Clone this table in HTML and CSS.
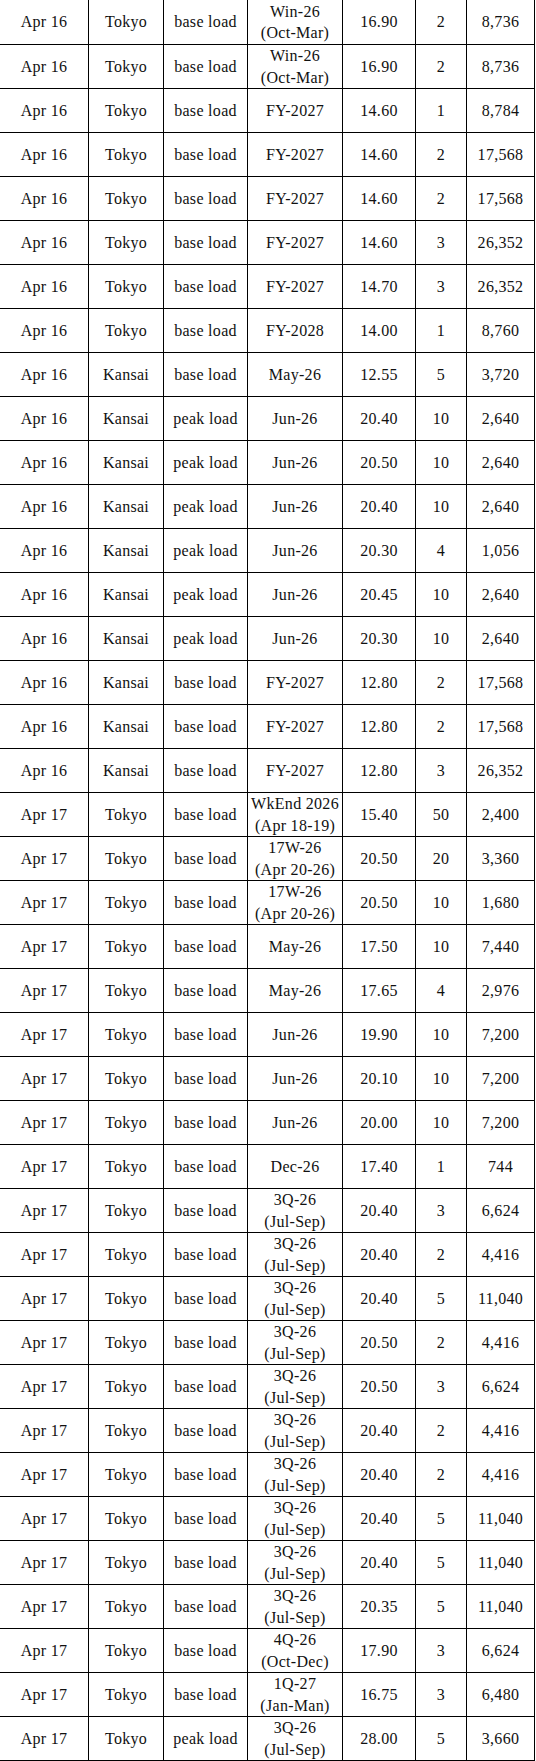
FILE: index.html
```html
<!DOCTYPE html>
<html>
<head>
<meta charset="utf-8">
<link rel="stylesheet" href="styles.css">
</head>
<body>
<table class="trades">
<colgroup>
<col class="c-date"><col class="c-area"><col class="c-type"><col class="c-period"><col class="c-price"><col class="c-qty"><col class="c-vol">
</colgroup>
<tbody>
<tr><td>Apr 16</td><td>Tokyo</td><td>base load</td><td>Win-26<br>(Oct-Mar)</td><td>16.90</td><td>2</td><td>8,736</td></tr>
<tr><td>Apr 16</td><td>Tokyo</td><td>base load</td><td>Win-26<br>(Oct-Mar)</td><td>16.90</td><td>2</td><td>8,736</td></tr>
<tr><td>Apr 16</td><td>Tokyo</td><td>base load</td><td>FY-2027</td><td>14.60</td><td>1</td><td>8,784</td></tr>
<tr><td>Apr 16</td><td>Tokyo</td><td>base load</td><td>FY-2027</td><td>14.60</td><td>2</td><td>17,568</td></tr>
<tr><td>Apr 16</td><td>Tokyo</td><td>base load</td><td>FY-2027</td><td>14.60</td><td>2</td><td>17,568</td></tr>
<tr><td>Apr 16</td><td>Tokyo</td><td>base load</td><td>FY-2027</td><td>14.60</td><td>3</td><td>26,352</td></tr>
<tr><td>Apr 16</td><td>Tokyo</td><td>base load</td><td>FY-2027</td><td>14.70</td><td>3</td><td>26,352</td></tr>
<tr><td>Apr 16</td><td>Tokyo</td><td>base load</td><td>FY-2028</td><td>14.00</td><td>1</td><td>8,760</td></tr>
<tr><td>Apr 16</td><td>Kansai</td><td>base load</td><td>May-26</td><td>12.55</td><td>5</td><td>3,720</td></tr>
<tr><td>Apr 16</td><td>Kansai</td><td>peak load</td><td>Jun-26</td><td>20.40</td><td>10</td><td>2,640</td></tr>
<tr><td>Apr 16</td><td>Kansai</td><td>peak load</td><td>Jun-26</td><td>20.50</td><td>10</td><td>2,640</td></tr>
<tr><td>Apr 16</td><td>Kansai</td><td>peak load</td><td>Jun-26</td><td>20.40</td><td>10</td><td>2,640</td></tr>
<tr><td>Apr 16</td><td>Kansai</td><td>peak load</td><td>Jun-26</td><td>20.30</td><td>4</td><td>1,056</td></tr>
<tr><td>Apr 16</td><td>Kansai</td><td>peak load</td><td>Jun-26</td><td>20.45</td><td>10</td><td>2,640</td></tr>
<tr><td>Apr 16</td><td>Kansai</td><td>peak load</td><td>Jun-26</td><td>20.30</td><td>10</td><td>2,640</td></tr>
<tr><td>Apr 16</td><td>Kansai</td><td>base load</td><td>FY-2027</td><td>12.80</td><td>2</td><td>17,568</td></tr>
<tr><td>Apr 16</td><td>Kansai</td><td>base load</td><td>FY-2027</td><td>12.80</td><td>2</td><td>17,568</td></tr>
<tr><td>Apr 16</td><td>Kansai</td><td>base load</td><td>FY-2027</td><td>12.80</td><td>3</td><td>26,352</td></tr>
<tr><td>Apr 17</td><td>Tokyo</td><td>base load</td><td>WkEnd 2026<br>(Apr 18-19)</td><td>15.40</td><td>50</td><td>2,400</td></tr>
<tr><td>Apr 17</td><td>Tokyo</td><td>base load</td><td>17W-26<br>(Apr 20-26)</td><td>20.50</td><td>20</td><td>3,360</td></tr>
<tr><td>Apr 17</td><td>Tokyo</td><td>base load</td><td>17W-26<br>(Apr 20-26)</td><td>20.50</td><td>10</td><td>1,680</td></tr>
<tr><td>Apr 17</td><td>Tokyo</td><td>base load</td><td>May-26</td><td>17.50</td><td>10</td><td>7,440</td></tr>
<tr><td>Apr 17</td><td>Tokyo</td><td>base load</td><td>May-26</td><td>17.65</td><td>4</td><td>2,976</td></tr>
<tr><td>Apr 17</td><td>Tokyo</td><td>base load</td><td>Jun-26</td><td>19.90</td><td>10</td><td>7,200</td></tr>
<tr><td>Apr 17</td><td>Tokyo</td><td>base load</td><td>Jun-26</td><td>20.10</td><td>10</td><td>7,200</td></tr>
<tr><td>Apr 17</td><td>Tokyo</td><td>base load</td><td>Jun-26</td><td>20.00</td><td>10</td><td>7,200</td></tr>
<tr><td>Apr 17</td><td>Tokyo</td><td>base load</td><td>Dec-26</td><td>17.40</td><td>1</td><td>744</td></tr>
<tr><td>Apr 17</td><td>Tokyo</td><td>base load</td><td>3Q-26<br>(Jul-Sep)</td><td>20.40</td><td>3</td><td>6,624</td></tr>
<tr><td>Apr 17</td><td>Tokyo</td><td>base load</td><td>3Q-26<br>(Jul-Sep)</td><td>20.40</td><td>2</td><td>4,416</td></tr>
<tr><td>Apr 17</td><td>Tokyo</td><td>base load</td><td>3Q-26<br>(Jul-Sep)</td><td>20.40</td><td>5</td><td>11,040</td></tr>
<tr><td>Apr 17</td><td>Tokyo</td><td>base load</td><td>3Q-26<br>(Jul-Sep)</td><td>20.50</td><td>2</td><td>4,416</td></tr>
<tr><td>Apr 17</td><td>Tokyo</td><td>base load</td><td>3Q-26<br>(Jul-Sep)</td><td>20.50</td><td>3</td><td>6,624</td></tr>
<tr><td>Apr 17</td><td>Tokyo</td><td>base load</td><td>3Q-26<br>(Jul-Sep)</td><td>20.40</td><td>2</td><td>4,416</td></tr>
<tr><td>Apr 17</td><td>Tokyo</td><td>base load</td><td>3Q-26<br>(Jul-Sep)</td><td>20.40</td><td>2</td><td>4,416</td></tr>
<tr><td>Apr 17</td><td>Tokyo</td><td>base load</td><td>3Q-26<br>(Jul-Sep)</td><td>20.40</td><td>5</td><td>11,040</td></tr>
<tr><td>Apr 17</td><td>Tokyo</td><td>base load</td><td>3Q-26<br>(Jul-Sep)</td><td>20.40</td><td>5</td><td>11,040</td></tr>
<tr><td>Apr 17</td><td>Tokyo</td><td>base load</td><td>3Q-26<br>(Jul-Sep)</td><td>20.35</td><td>5</td><td>11,040</td></tr>
<tr><td>Apr 17</td><td>Tokyo</td><td>base load</td><td>4Q-26<br>(Oct-Dec)</td><td>17.90</td><td>3</td><td>6,624</td></tr>
<tr><td>Apr 17</td><td>Tokyo</td><td>base load</td><td>1Q-27<br>(Jan-Man)</td><td>16.75</td><td>3</td><td>6,480</td></tr>
<tr><td>Apr 17</td><td>Tokyo</td><td>peak load</td><td>3Q-26<br>(Jul-Sep)</td><td>28.00</td><td>5</td><td>3,660</td></tr>
</tbody>
</table>
</body>
</html>
```

FILE: styles.css
```css
html, body {
  margin: 0;
  padding: 0;
  background: #fff;
}

.trades {
  border-collapse: separate;
  border-spacing: 0;
  table-layout: fixed;
  width: 535px;
  font-family: "Liberation Serif", "Times New Roman", serif;
  font-size: 16px;
  letter-spacing: 0.3px;
  color: #111;
}

.c-date { width: 89px; }
.c-area { width: 75px; }
.c-type { width: 84px; }
.c-period { width: 95px; }
.c-price { width: 73px; }
.c-qty { width: 51px; }
.c-vol { width: 68px; }

.trades td {
  box-sizing: content-box;
  height: 43px;
  padding: 0;
  border-right: 1px solid #000;
  border-bottom: 1px solid #000;
  text-align: center;
  vertical-align: middle;
  line-height: 21.5px;
  white-space: nowrap;
  overflow: hidden;
}

.trades tr:first-child td {
  height: 44px;
}
```
